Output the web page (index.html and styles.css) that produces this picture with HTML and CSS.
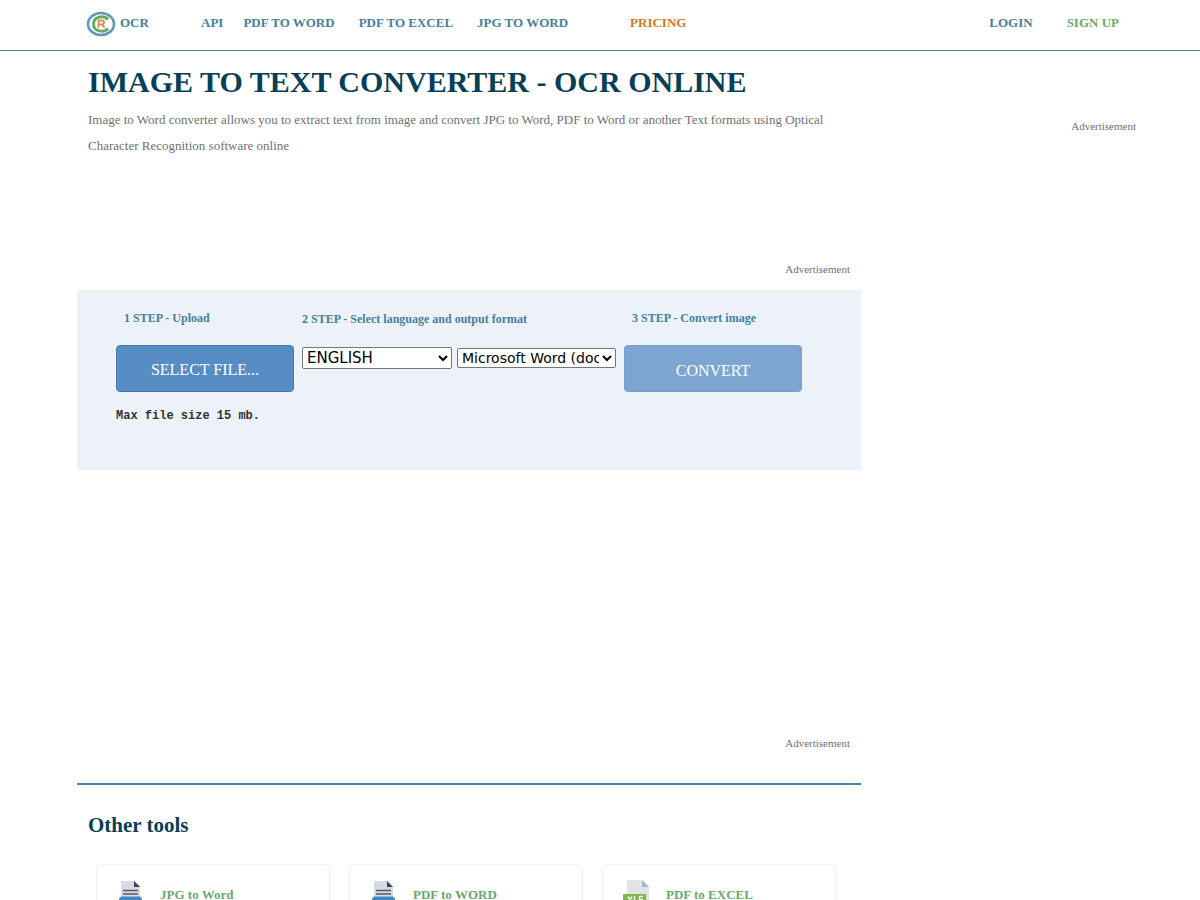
FILE: index.html
```html
<!DOCTYPE html>
<html lang="en">
<head>
<meta charset="utf-8">
<title>Image to text converter - OCR online</title>
<link rel="stylesheet" href="styles.css">
</head>
<body>
<header class="topbar">
  <a class="brand" href="#">
    <svg class="logo" viewBox="0 0 30 26" aria-hidden="true">
      <ellipse cx="15" cy="13" rx="13" ry="11" fill="#fff" stroke="#6098b8" stroke-width="2.6"/>
      <path d="M22 8.500C18 4 7.500 5 7.500 13s10.500 9 14.500 4.500" fill="none" stroke="#62aa68" stroke-width="2.800"/>
      <path d="M12.500 16.500V9.500h3.500q2 0 2 1.900t-2 1.900h-3.500M15.800 13.300l2.700 3.200" fill="none" stroke="#dd8748" stroke-width="1.800"/>
    </svg>
    <span>OCR</span>
  </a>
  <nav class="menu">
    <a href="#">API</a>
    <a href="#">PDF TO WORD</a>
    <a href="#">PDF TO EXCEL</a>
    <a href="#">JPG TO WORD</a>
    <a class="pricing" href="#">PRICING</a>
  </nav>
  <div class="account">
    <a href="#">LOGIN</a>
    <a class="signup" href="#">SIGN UP</a>
  </div>
</header>
<div class="layout">
  <main class="content">
    <section class="intro">
      <h1>IMAGE TO TEXT CONVERTER - OCR ONLINE</h1>
      <p>Image to Word converter allows you to extract text from image and convert JPG to Word, PDF to Word or another Text formats using Optical Character Recognition software online</p>
    </section>
    <div class="ad ad-top">Advertisement</div>
    <form class="converter">
      <div class="step step-upload">
        <h2>1 STEP - Upload</h2>
        <button class="action" type="button">SELECT FILE...</button>
        <p class="limit">Max file size 15 mb.</p>
      </div>
      <div class="step step-format">
        <h2>2 STEP - Select language and output format</h2>
        <div class="selects">
          <select class="language" aria-label="Language"><option>ENGLISH</option></select>
          <select class="format" aria-label="Output format"><option>Microsoft Word (docx)</option></select>
        </div>
      </div>
      <div class="step step-convert">
        <h2>3 STEP - Convert image</h2>
        <button class="action convert" type="button">CONVERT</button>
      </div>
    </form>
    <div class="ad ad-middle">Advertisement</div>
    <section class="tools">
      <h2>Other tools</h2>
      <div class="cards">
        <a class="card" href="#">
          <svg class="icon" viewBox="0 0 28 36" aria-hidden="true"><path d="M4 1h14l5 5v27H4z" fill="#d8dade"/><path d="M17 1l6 6h-6z" fill="#3d4458"/><path d="M6 10.500h15M6 14h15" stroke="#505b78" stroke-width="1.400"/><path d="M4 16.500h19l2 2v10H2v-10z" fill="#4386c5"/></svg>
          <span>JPG to Word</span>
        </a>
        <a class="card" href="#">
          <svg class="icon" viewBox="0 0 28 36" aria-hidden="true"><path d="M4 1h14l5 5v27H4z" fill="#d8dade"/><path d="M17 1l6 6h-6z" fill="#3d4458"/><path d="M6 10.500h15M6 14h15" stroke="#505b78" stroke-width="1.400"/><path d="M4 16.500h19l2 2v10H2v-10z" fill="#4386c5"/></svg>
          <span>PDF to WORD</span>
        </a>
        <a class="card" href="#">
          <svg class="icon" viewBox="0 0 28 36" aria-hidden="true"><path d="M4 0h15l7 7v27H4z" fill="#e1e4e7"/><path d="M19 0l7 7h-7z" fill="#a9b3bb"/><rect x="0" y="14" width="23" height="12" rx="1" fill="#7fb550"/><path d="M5 16.500l4 6M9 16.500l-4 6M11.500 16v6.500h3M20 16.500h-3.500v3h3v3H16" fill="none" stroke="#edf5e8" stroke-width="1.400"/></svg>
          <span>PDF to EXCEL</span>
        </a>
      </div>
    </section>
  </main>
  <aside class="sidebar"><div class="ad">Advertisement</div></aside>
</div>
</body>
</html>
```
FILE: styles.css
```css
* { box-sizing: border-box; }
body {
  margin: 0;
  height: 100vh;
  overflow: hidden;
  background: #fff;
  color: #707070;
  font: 13px/26px "Liberation Serif", serif;
}
h1, h2, p { margin: 0; }
a { color: #46809e; text-decoration: none; }
.topbar {
  display: flex;
  align-items: center;
  padding: 0 81px 4px 86px;
  height: 51px;
  border-bottom: 1px solid #5c8488;
  font-weight: bold;
}
.brand { display: flex; align-items: center; gap: 4px; width: 115px; }
.logo { width: 30px; height: 26px; margin-top: 2px; }
.menu { display: flex; flex: 1; }
.menu a { margin-right: 24px; }
.menu a:first-child { margin-right: 20px; }
.menu .pricing { margin-left: 38px; color: #d97818; }
.account { display: flex; gap: 34px; }
.account .signup { color: #67ab6b; }
.layout { display: flex; padding: 0 64px 0 77px; }
.content { flex: 0 1 784px; min-width: 0; }
.intro { padding: 12px 11px 0; height: 208px; }
h1 { color: #073f56; font-size: 30px; line-height: 38px; margin-bottom: 6px; }
.ad { font-size: 11px; line-height: 20px; text-align: right; }
.ad-top { padding: 0 11px 11px 0; }
.converter {
  display: flex;
  min-height: 180px;
  padding: 18px 60px 0 39px;
  background: #ecf2f8;
}
.step { display: flex; flex-direction: column; align-items: flex-start; }
.step h2 { color: #46809e; font-size: 12px; line-height: 20px; }
.step-upload { width: 178px; margin-right: 8px; }
.step-upload h2, .step-convert h2 { padding-left: 8px; margin-bottom: 17px; }
.step-format { margin-right: 8px; padding-top: 1px; }
.selects { display: flex; align-items: center; gap: 5px; margin-top: 18px; }
select {
  background: #fff;
  border: 1px solid #767676;
  border-radius: 2px;
  color: #000;
  padding: 0;
  font-family: "DejaVu Sans", sans-serif;
}
.language { width: 150px; height: 22px; font-size: 15px; }
.format { width: 159px; height: 20px; font-size: 14px; }
.action {
  width: 178px;
  height: 47px;
  padding: 2px 0 0;
  border: 1px solid #4379ae;
  border-radius: 4px;
  background: #568dc5;
  color: #fff;
  font: 16px/24px "Liberation Serif", serif;
}
.convert { padding-top: 5px; border-color: #759ec9; background: #7ca5d1; }
.limit { margin-top: 14px; color: #333; font: bold 12px/20px "Liberation Mono", monospace; }
.ad-middle { padding-top: 263px; padding-right: 11px; }
.tools { margin-top: 30px; border-top: 2px solid #46809e; padding: 26px 0 0 11px; }
.tools h2 { color: #073f56; font-size: 21px; line-height: 28px; margin-bottom: 25px; }
.cards { display: grid; grid-template-columns: repeat(3, 1fr); gap: 19px; padding: 0 25px 0 8px; }
.card {
  display: flex;
  align-items: flex-start;
  gap: 15px;
  height: 110px;
  padding: 15px 20px;
  border: 1px solid #f0f0f0;
  border-radius: 5px;
  color: #67ab6b;
  font-weight: bold;
  line-height: 30px;
}
.icon { flex: none; width: 28px; height: 36px; }
.sidebar { flex: 1; padding-top: 65px; }
```
